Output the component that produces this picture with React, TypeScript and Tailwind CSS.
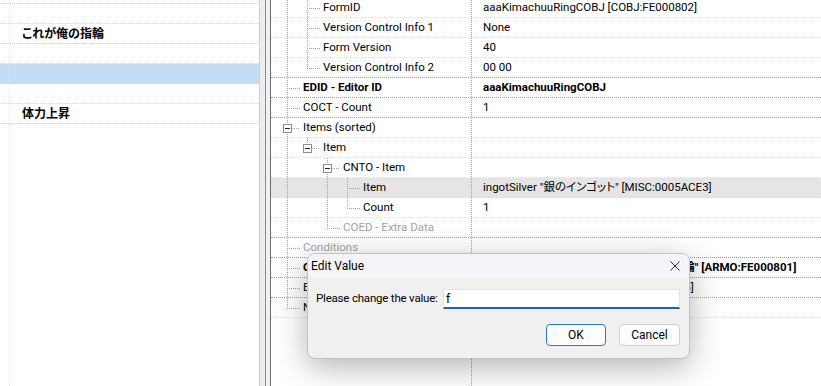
import React from "react";

const FONT = "font-['Roboto','Noto_Sans_CJK_JP',sans-serif] [font-feature-settings:'palt']";

type Row = {
  label: string;
  value?: string;
  level: number;
  anc: boolean[];
  next: boolean;
  button?: boolean;
  bold?: boolean;
  gray?: boolean;
  dark?: boolean;
  hl?: boolean;
};

const rows: Row[] = [
  { label: "FormID", value: "aaaKimachuuRingCOBJ [COBJ:FE000802]", level: 2, anc: [true], next: true },
  { label: "Version Control Info 1", value: "None", level: 2, anc: [true], next: true },
  { label: "Form Version", value: "40", level: 2, anc: [true], next: true },
  { label: "Version Control Info 2", value: "00 00", level: 2, anc: [true], next: false, dark: true },
  { label: "EDID - Editor ID", value: "aaaKimachuuRingCOBJ", level: 1, anc: [], next: true, bold: true, dark: true },
  { label: "COCT - Count", value: "1", level: 1, anc: [], next: true, dark: true },
  { label: "Items (sorted)", level: 1, anc: [], next: true, button: true },
  { label: "Item", level: 2, anc: [true], next: false, button: true },
  { label: "CNTO - Item", level: 3, anc: [true, false], next: true, button: true },
  { label: "Item", value: "ingotSilver \"銀のインゴット\" [MISC:0005ACE3]", level: 4, anc: [true, false, true], next: true, hl: true },
  { label: "Count", value: "1", level: 4, anc: [true, false, true], next: false },
  { label: "COED - Extra Data", level: 3, anc: [true, false], next: false, gray: true, dark: true },
  { label: "Conditions", level: 1, anc: [], next: true, gray: true, dark: true },
  { label: "CNAM - Created Object", value: "aaaKimachuuRingARMO \"これが俺の指輪\" [ARMO:FE000801]", level: 1, anc: [], next: true, bold: true, dark: true },
  { label: "BNAM - Workbench Keyword", value: "CraftingSmithingForge [KYWD:00088105]", level: 1, anc: [], next: true, dark: true },
  { label: "NAM1 - Created Object Count", value: "1", level: 1, anc: [], next: false },
];

const leftRows: { t: string; sel?: boolean }[] = [
  { t: "" },
  { t: "" },
  { t: "これが俺の指輪" },
  { t: "" },
  { t: "", sel: true },
  { t: "" },
  { t: "体力上昇" },
];

function Lines({ r }: { r: Row }) {
  const w = 20 * r.level + 12;
  const px = (k: number) => 20 * k - 4;
  const C = "#a0a0a0";
  const dash = "1 1";
  const L = px(r.level);
  const items: React.ReactNode[] = [];
  r.anc.forEach((c, i) => {
    if (c) {
      const x = px(i + 1) + 0.5;
      items.push(<line key={"a" + i} x1={x} x2={x} y1={0} y2={20} stroke={C} strokeDasharray={dash} />);
    }
  });
  items.push(<line key="t" x1={L + 0.5} x2={L + 0.5} y1={0} y2={r.button ? 6 : 10} stroke={C} strokeDasharray={dash} />);
  if (r.next)
    items.push(<line key="b" x1={L + 0.5} x2={L + 0.5} y1={r.button ? 16 : 10} y2={20} stroke={C} strokeDasharray={dash} />);
  items.push(<line key="h" x1={r.button ? L + 5 : L} x2={L + 13} y1={10.5} y2={10.5} stroke={C} strokeDasharray={dash} />);
  if (r.button) {
    items.push(<rect key="r" x={L - 3.5} y={6.5} width={8} height={8} fill="#ffffff" stroke="#8e8e8e" />);
    items.push(<line key="m" x1={L - 2} x2={L + 3} y1={10.5} y2={10.5} stroke="#222222" />);
  }
  return (
    <svg width={w} height={20} className="shrink-0 self-start overflow-visible" shapeRendering="crispEdges">
      {items}
    </svg>
  );
}

export default function App() {
  return (
    <div className={`relative w-[821px] h-[386px] overflow-hidden bg-white flex text-[11.5px] text-black ${FONT}`}>
      {/* left list */}
      <div className="w-[259px] h-full flex flex-col overflow-hidden">
        <div className="-mt-[16px] flex flex-col">
          {leftRows.map((r, i) => (
            <div
              key={i}
              className={`h-[20px] flex border-b border-dotted border-[#d4d4d4] ${r.sel ? "bg-[#c4ddf3]" : ""}`}
            >
              <div className="w-[10px] shrink-0 border-r border-dotted border-[#e2e2e2]" />
              <div className="pl-[12px] flex items-center font-bold text-[12px] whitespace-nowrap">{r.t}</div>
            </div>
          ))}
        </div>
        <div className="flex-1 flex">
          <div className="w-[10px] border-r border-dotted border-[#e2e2e2]" />
        </div>
      </div>

      {/* splitter */}
      <div className="flex h-full shrink-0">
        <div className="w-px bg-[#cfcfcf]" />
        <div className="w-[5px] bg-[#ececec]" />
        <div className="w-px bg-[#8d8d8d]" />
        <div className="w-[4px] bg-[#f0f0f0]" />
        <div className="w-px bg-[#6b6b6b]" />
      </div>

      {/* tree */}
      <div className="flex-1 h-full flex flex-col overflow-hidden">
        <div className="-mt-[2px] flex flex-col">
          {rows.map((r, i) => (
            <div
              key={i}
              className={`h-[20px] flex border-b border-dotted ${r.dark ? "border-[#9c9c9c]" : "border-[#dedede]"} ${
                r.hl ? "bg-[#e5e5e5]" : ""
              }`}
            >
              <div className="w-[201px] shrink-0 flex border-r border-dotted border-[#a0a0a0] overflow-hidden">
                <Lines r={r} />
                <div
                  className={`flex items-center whitespace-nowrap ${r.bold ? "font-bold" : ""} ${
                    r.gray ? "text-[#a3a3a3]" : ""
                  }`}
                >
                  {r.label}
                </div>
              </div>
              <div className={`pl-[11px] flex items-center whitespace-nowrap ${r.bold ? "font-bold" : ""}`}>
                {r.value ?? ""}
              </div>
            </div>
          ))}
        </div>
        <div className="flex-1 flex">
          <div className="w-[201px] border-r border-dotted border-[#a0a0a0]" />
        </div>
      </div>

      {/* dialog */}
      <div className="absolute left-[307px] top-[253px] w-[383px] h-[106px] rounded-[8px] border border-[#c2c2c2] bg-[#f0f0f0] shadow-[0_8px_32px_rgba(0,0,0,0.3)] overflow-hidden flex flex-col text-[12px]">
        <div className="h-[24px] shrink-0 flex items-center justify-between pl-[3px] pr-[9px] bg-[#f3f5f8]">
          <span>Edit Value</span>
          <svg width="10" height="10" viewBox="0 0 10 10">
            <path d="M0.5 0.5 L9.5 9.5 M9.5 0.5 L0.5 9.5" stroke="#2b2b2b" strokeWidth="1" fill="none" />
          </svg>
        </div>
        <div className="flex flex-col pl-[8px] pr-[9px] pt-[11px]">
          <div className="flex items-center">
            <div className="w-[127px] shrink-0 whitespace-nowrap text-[11.5px] tracking-[-0.2px]">
              Please change the value:
            </div>
            <div className="w-[237px] h-[20px] bg-white border border-[#e3e3e3] border-b-2 border-b-[#1f62a6] flex items-center pl-[2px]">
              f
            </div>
          </div>
          <div className="flex justify-end gap-[13px] mt-[15px]">
            <div className="w-[60px] h-[22px] rounded-[4px] border border-[#2f78b8] bg-[#fdfdfd] flex items-center justify-center">
              OK
            </div>
            <div className="w-[61px] h-[22px] rounded-[4px] border border-[#d0d0d0] bg-[#fdfdfd] flex items-center justify-center">
              Cancel
            </div>
          </div>
        </div>
      </div>
    </div>
  );
}
